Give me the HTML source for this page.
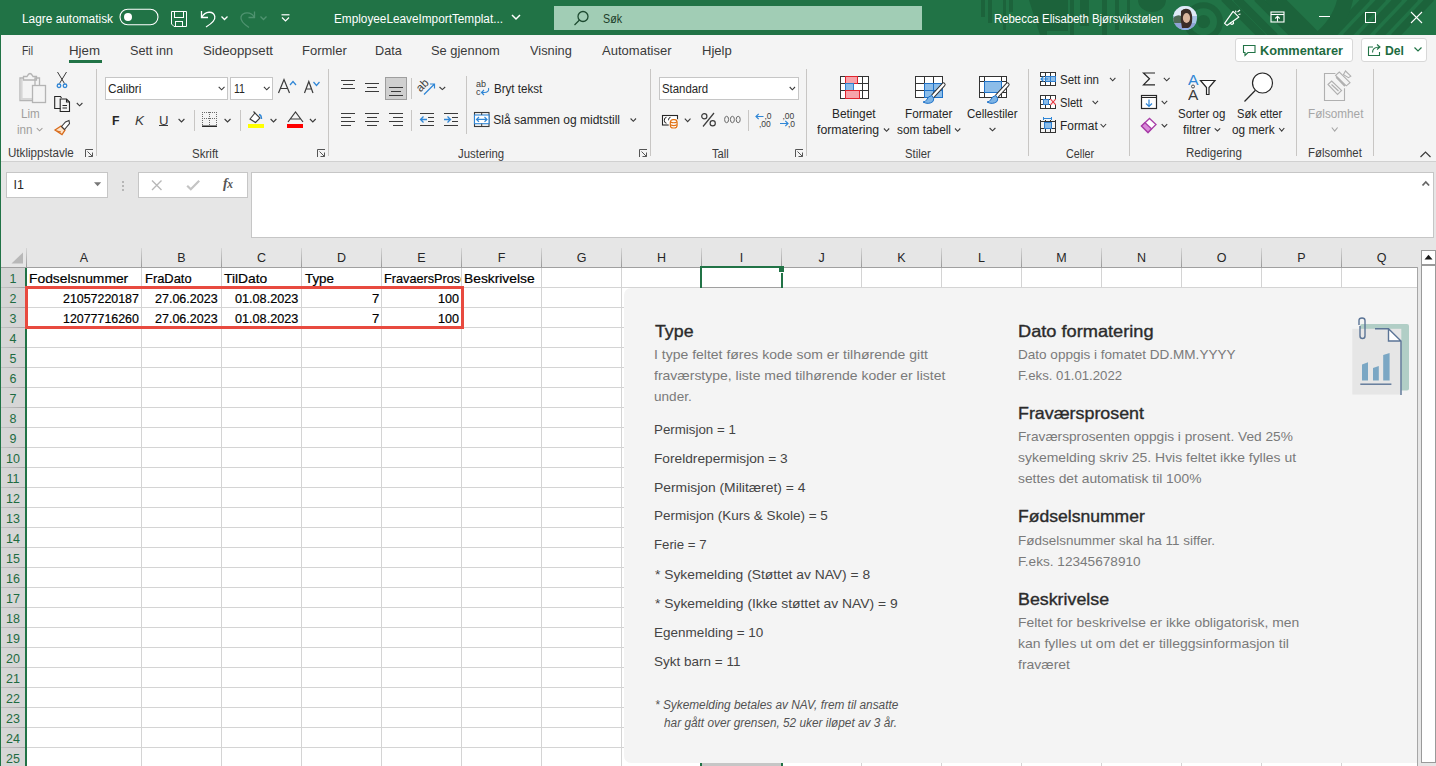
<!DOCTYPE html>
<html><head><meta charset="utf-8">
<style>
*{margin:0;padding:0;box-sizing:border-box}
html,body{width:1436px;height:766px;overflow:hidden;background:#fff;font-family:"Liberation Sans",sans-serif}
.a{position:absolute;white-space:nowrap}
svg.a{overflow:visible}
</style></head><body>
<div class="a" style="left:0;top:0;width:1436px;height:35px;background:#217346;overflow:hidden">
<svg class="a" style="left:0;top:0" width="1436" height="35">
<g fill="#1c633b">
<rect x="981" y="0" width="4" height="17"/><rect x="988" y="0" width="4" height="23"/>
<rect x="1003" y="0" width="3" height="30"/><rect x="1009" y="0" width="4" height="12"/>
<path d="M1029 0 H1047 V35 H1040 Z"/><rect x="1047" y="0" width="21" height="31"/>
<rect x="1070" y="0" width="4" height="35"/><rect x="1080" y="0" width="9" height="26"/>
<rect x="1102" y="0" width="5" height="35"/><rect x="1115" y="0" width="4" height="30"/><rect x="1127" y="0" width="3" height="20"/>
<path d="M1138 0 H1166 A14 12 0 0 1 1138 0 Z"/><circle cx="1203.5" cy="21.7" r="6.6"/>
</g>
<g fill="none" stroke="#1c633b">
<circle cx="1203.5" cy="21.7" r="16.5" stroke-width="6"/>
<circle cx="1270" cy="40" r="75" stroke-width="15" opacity="0"/>
</g>
<g stroke="#1c633b" stroke-width="8">
<line x1="1236" y1="-2" x2="1275" y2="37"/><line x1="1224" y1="-2" x2="1263" y2="37"/>
<line x1="1257" y1="-2" x2="1296" y2="37"/><line x1="1268" y1="-2" x2="1307" y2="37"/>
<line x1="1279" y1="-2" x2="1318" y2="37"/>
<line x1="1367" y1="-2" x2="1330" y2="37"/><line x1="1383" y1="-2" x2="1346" y2="37"/>
<line x1="1399" y1="-2" x2="1362" y2="37"/><line x1="1415" y1="-2" x2="1378" y2="37"/>
<line x1="1431" y1="-2" x2="1394" y2="37"/>
</g>
<path d="M1337 0 H1353 Q1348 24 1332 35 H1313 Q1332 20 1337 0 Z" fill="#1c633b"/>
</svg>
</div>
<div class="a" style="left:22.00px;top:11.64px;font-size:12px;color:#fff;line-height:normal;transform:scaleX(0.9887);transform-origin:0 0;">Lagre automatisk</div>
<svg class="a" style="left:119px;top:8px;" width="41" height="19" viewBox="0 0 41 19"><rect x="1" y="1.2" width="38" height="15.6" rx="7.8" fill="none" stroke="#fff" stroke-width="1.1"/><circle cx="9" cy="9" r="4" fill="#fff"/></svg>
<svg class="a" style="left:170px;top:10px;" width="19" height="19" viewBox="0 0 19 19"><g fill="none" stroke="#fff" stroke-width="1"><path d="M1.5 1.5 H16.5 V16.5 H4 L1.5 14 Z"/><rect x="4.5" y="1.5" width="9" height="6"/><rect x="5.5" y="11.5" width="7" height="5"/></g></svg>
<svg class="a" style="left:199px;top:10px;" width="32" height="19" viewBox="0 0 32 19"><g fill="none" stroke="#fff" stroke-width="1.3"><path d="M2.5 1 V7.5 H9"/><path d="M3 7 C6 1 14.5 0.5 15.8 6.5 C16.5 10 12 14 7 17"/><path d="M22.5 6.5 L25.5 9.5 L28.5 6.5"/></g></svg>
<svg class="a" style="left:239px;top:10px;" width="32" height="19" viewBox="0 0 32 19"><g fill="none" stroke="#4f9370" stroke-width="1.3"><path d="M15.5 1.5 V7.5 H9.5"/><path d="M15 7 C12.5 1.5 3.5 1.5 2 7 C1 11 5.5 14.5 10 17.5"/><path d="M21.5 6.5 L24.5 9.5 L27.5 6.5"/></g></svg>
<svg class="a" style="left:280px;top:13px;" width="11" height="10" viewBox="0 0 11 10"><g fill="none" stroke="#fff" stroke-width="1.2"><line x1="1.5" y1="1.8" x2="9.5" y2="1.8"/><path d="M2 4.5 L5.5 8 L9 4.5"/></g></svg>
<div class="a" style="left:334.00px;top:12.14px;font-size:12px;color:#fff;line-height:normal;transform:scaleX(0.9821);transform-origin:0 0;">EmployeeLeaveImportTemplat...</div>
<svg class="a" style="left:510px;top:13px;" width="12" height="9" viewBox="0 0 12 9"><path d="M2 2 L6 6 L10 2" fill="none" stroke="#fff" stroke-width="1.5"/></svg>
<div class="a" style="left:554px;top:6px;width:368px;height:24px;background:#a1cdb5;"></div>
<svg class="a" style="left:573px;top:10px;" width="17" height="17" viewBox="0 0 17 17"><g fill="none" stroke="#1d4a30" stroke-width="1.3"><circle cx="10" cy="6.5" r="5"/><line x1="6.5" y1="10" x2="1.5" y2="15"/></g></svg>
<div class="a" style="left:603.00px;top:12.14px;font-size:12px;color:#1d3d2a;line-height:normal;transform:scaleX(0.8906);transform-origin:0 0;">Søk</div>
<div class="a" style="left:994.00px;top:12.34px;font-size:12px;color:#fff;line-height:normal;transform:scaleX(0.9478);transform-origin:0 0;">Rebecca Elisabeth Bjørsvikstølen</div>
<svg class="a" style="left:1173px;top:6px;" width="25" height="25" viewBox="0 0 25 25"><defs><clipPath id="av"><circle cx="12.1" cy="12" r="11.9"/></clipPath></defs>
<g clip-path="url(#av)"><rect width="25" height="25" fill="#a9c4e6"/><rect y="0" width="25" height="10" fill="#dfeaf6"/>
<path d="M0 12 Q4 8 8 10 L9 18 L0 20 Z" fill="#4f6a55"/><rect y="17" width="25" height="8" fill="#8fa3d6"/>
<path d="M8 5 Q12 1 17 4 Q20 8 19 16 Q18 21 15 22 L9 22 Q7 14 8 5 Z" fill="#3a2c26"/>
<ellipse cx="13.5" cy="12" rx="3.6" ry="5" fill="#d9b59c"/><path d="M11 22 L17 22 L18 25 L10 25 Z" fill="#8fb0e8"/></g></svg>
<svg class="a" style="left:1222px;top:8px;" width="21" height="20" viewBox="0 0 21 20"><g fill="none" stroke="#fff" stroke-width="1.2" stroke-linejoin="round"><path d="M2.6 15.4 L11.1 3.4 L16.9 9.1 L4.9 17.4 Z"/><path d="M8.3 14.5 Q9 17.5 11.5 15.5 L11.3 13.3"/><line x1="13.5" y1="2.6" x2="14" y2="4.5"/><line x1="15.5" y1="4" x2="18" y2="2"/><line x1="16.5" y1="6.5" x2="18.5" y2="6"/></g></svg>
<svg class="a" style="left:1270px;top:11px;" width="16" height="13" viewBox="0 0 16 13"><g fill="none" stroke="#fff" stroke-width="1.1"><rect x="1" y="1" width="13" height="10"/><line x1="1" y1="3.5" x2="14" y2="3.5"/><path d="M7.5 10.5 V5.5 M5.3 7.5 L7.5 5.3 L9.7 7.5"/></g></svg>
<div class="a" style="left:1319px;top:16px;width:11px;height:1px;background:#fff;"></div>
<div class="a" style="left:1365px;top:12px;width:11px;height:11px;background:transparent;border:1px solid #fff"></div>
<svg class="a" style="left:1410px;top:11px;" width="13" height="13" viewBox="0 0 13 13"><g stroke="#fff" stroke-width="1.1"><line x1="1" y1="1" x2="12" y2="12"/><line x1="12" y1="1" x2="1" y2="12"/></g></svg>
<div class="a" style="left:0px;top:35px;width:1436px;height:127px;background:#f4f4f4;"></div>
<div class="a" style="left:22.00px;top:43.23px;font-size:13px;color:#3a3a3a;line-height:normal;transform:scaleX(0.8019);transform-origin:0 0;">Fil</div>
<div class="a" style="left:69.20px;top:43.23px;font-size:13px;color:#3a3a3a;line-height:normal;transform:scaleX(1.0219);transform-origin:0 0;">Hjem</div>
<div class="a" style="left:129.80px;top:43.23px;font-size:13px;color:#3a3a3a;line-height:normal;transform:scaleX(0.9755);transform-origin:0 0;">Sett inn</div>
<div class="a" style="left:203.00px;top:43.23px;font-size:13px;color:#3a3a3a;line-height:normal;transform:scaleX(1.0195);transform-origin:0 0;">Sideoppsett</div>
<div class="a" style="left:302.00px;top:43.23px;font-size:13px;color:#3a3a3a;line-height:normal;">Formler</div>
<div class="a" style="left:375.20px;top:43.23px;font-size:13px;color:#3a3a3a;line-height:normal;transform:scaleX(0.9760);transform-origin:0 0;">Data</div>
<div class="a" style="left:430.80px;top:43.23px;font-size:13px;color:#3a3a3a;line-height:normal;transform:scaleX(0.9903);transform-origin:0 0;">Se gjennom</div>
<div class="a" style="left:529.60px;top:43.23px;font-size:13px;color:#3a3a3a;line-height:normal;transform:scaleX(0.9858);transform-origin:0 0;">Visning</div>
<div class="a" style="left:602.10px;top:43.23px;font-size:13px;color:#3a3a3a;line-height:normal;">Automatiser</div>
<div class="a" style="left:701.80px;top:43.23px;font-size:13px;color:#3a3a3a;line-height:normal;transform:scaleX(1.0059);transform-origin:0 0;">Hjelp</div>
<div class="a" style="left:69px;top:60px;width:33px;height:3px;background:#217346;"></div>
<div class="a" style="left:1235px;top:38px;width:118px;height:24px;background:#fff;border:1px solid #d8d8d8;border-radius:3px"></div>
<svg class="a" style="left:1242px;top:44px;" width="15" height="13" viewBox="0 0 15 13"><path d="M1.5 1.5 H13 V8.5 H6 L3 11.5 V8.5 H1.5 Z" fill="none" stroke="#217346" stroke-width="1.1"/></svg>
<div class="a" style="left:1259.50px;top:43.23px;font-size:13px;color:#1e6b3f;line-height:normal;font-weight:bold;transform:scaleX(0.9820);transform-origin:0 0;">Kommentarer</div>
<div class="a" style="left:1361px;top:38px;width:66px;height:24px;background:#fff;border:1px solid #d8d8d8;border-radius:3px"></div>
<svg class="a" style="left:1367px;top:42px;" width="16" height="15" viewBox="0 0 16 15"><g fill="none" stroke="#217346" stroke-width="1.1"><path d="M6 5 H1.5 V13.5 H12.5 V10"/><path d="M5.5 10.5 C5.5 7 8.5 5 12.5 5 M10 2.5 L13 5 L10 7.5"/></g></svg>
<div class="a" style="left:1385.00px;top:43.23px;font-size:13px;color:#1e6b3f;line-height:normal;font-weight:bold;transform:scaleX(0.9392);transform-origin:0 0;">Del</div>
<svg class="a" style="left:1413px;top:46px;" width="10" height="7" viewBox="0 0 10 7"><path d="M1.5 1.5 L5 5 L8.5 1.5" fill="none" stroke="#217346" stroke-width="1.2"/></svg>
<div class="a" style="left:96px;top:69px;width:1px;height:87px;background:#c8c6c4;"></div>
<div class="a" style="left:328px;top:69px;width:1px;height:87px;background:#c8c6c4;"></div>
<div class="a" style="left:650px;top:69px;width:1px;height:87px;background:#c8c6c4;"></div>
<div class="a" style="left:806px;top:69px;width:1px;height:87px;background:#c8c6c4;"></div>
<div class="a" style="left:1028px;top:69px;width:1px;height:87px;background:#c8c6c4;"></div>
<div class="a" style="left:1129px;top:69px;width:1px;height:87px;background:#c8c6c4;"></div>
<div class="a" style="left:1296px;top:69px;width:1px;height:87px;background:#c8c6c4;"></div>
<div class="a" style="left:1373px;top:69px;width:1px;height:87px;background:#c8c6c4;"></div>
<div class="a" style="left:0px;top:161px;width:1436px;height:1px;background:#d0d0d0;"></div>
<svg class="a" style="left:1419px;top:150px;" width="13" height="9" viewBox="0 0 13 9"><path d="M1.5 7 L6.5 2 L11.5 7" fill="none" stroke="#3b3b3b" stroke-width="1.2"/></svg>
<div class="a" style="left:7.70px;top:146.44px;font-size:12px;color:#3b3b3b;line-height:normal;transform:scaleX(0.9658);transform-origin:0 0;">Utklippstavle</div>
<div class="a" style="left:191.60px;top:146.54px;font-size:12px;color:#3b3b3b;line-height:normal;transform:scaleX(0.9622);transform-origin:0 0;">Skrift</div>
<div class="a" style="left:458.00px;top:146.54px;font-size:12px;color:#3b3b3b;line-height:normal;transform:scaleX(0.9489);transform-origin:0 0;">Justering</div>
<div class="a" style="left:712.20px;top:146.54px;font-size:12px;color:#3b3b3b;line-height:normal;transform:scaleX(0.9330);transform-origin:0 0;">Tall</div>
<div class="a" style="left:905.30px;top:146.54px;font-size:12px;color:#3b3b3b;line-height:normal;transform:scaleX(0.9400);transform-origin:0 0;">Stiler</div>
<div class="a" style="left:1065.50px;top:146.54px;font-size:12px;color:#3b3b3b;line-height:normal;transform:scaleX(0.8998);transform-origin:0 0;">Celler</div>
<div class="a" style="left:1185.60px;top:146.44px;font-size:12px;color:#3b3b3b;line-height:normal;transform:scaleX(0.9632);transform-origin:0 0;">Redigering</div>
<div class="a" style="left:1308.20px;top:146.44px;font-size:12px;color:#3b3b3b;line-height:normal;transform:scaleX(0.9493);transform-origin:0 0;">Følsomhet</div>
<svg class="a" style="left:85px;top:149px;" width="9" height="9" viewBox="0 0 9 9"><g fill="none" stroke="#555" stroke-width="1"><path d="M0.5 8 V0.5 H8"/><path d="M2.5 2.5 L7.5 7.5 M7.5 3.5 V7.5 H3.5"/></g></svg>
<svg class="a" style="left:317px;top:149px;" width="9" height="9" viewBox="0 0 9 9"><g fill="none" stroke="#555" stroke-width="1"><path d="M0.5 8 V0.5 H8"/><path d="M2.5 2.5 L7.5 7.5 M7.5 3.5 V7.5 H3.5"/></g></svg>
<svg class="a" style="left:639px;top:149px;" width="9" height="9" viewBox="0 0 9 9"><g fill="none" stroke="#555" stroke-width="1"><path d="M0.5 8 V0.5 H8"/><path d="M2.5 2.5 L7.5 7.5 M7.5 3.5 V7.5 H3.5"/></g></svg>
<svg class="a" style="left:795px;top:149px;" width="9" height="9" viewBox="0 0 9 9"><g fill="none" stroke="#555" stroke-width="1"><path d="M0.5 8 V0.5 H8"/><path d="M2.5 2.5 L7.5 7.5 M7.5 3.5 V7.5 H3.5"/></g></svg>
<svg class="a" style="left:18px;top:72px;" width="30" height="32" viewBox="0 0 30 32"><g fill="none" stroke="#b4b4b4" stroke-width="1.3">
<path d="M6 6 H2 V28.5 H14"/><path d="M3.6 7 V27 H14" stroke="#d6d6d6" stroke-width="2"/>
<path d="M17 13 V6 H21.5 V13" /><path d="M5.5 8 V4.5 H9 Q10.5 1.5 12 1.5 Q13.5 1.5 15 4.5 H18.5 V8 Z"/>
<rect x="14.5" y="13.5" width="13" height="17"/></g></svg>
<div class="a" style="left:20.50px;top:106.94px;font-size:12px;color:#a19f9d;line-height:normal;transform:scaleX(0.9723);transform-origin:0 0;">Lim</div>
<div class="a" style="left:16.80px;top:122.54px;font-size:12px;color:#a19f9d;line-height:normal;transform:scaleX(0.9742);transform-origin:0 0;">inn</div>
<svg class="a" style="left:35px;top:127px;" width="8" height="5" viewBox="0 0 8 5"><path d="M1.7999999999999972 1.1999999999999886 L4.599999999999998 3.8000000000000114 L7.399999999999999 1.1999999999999886" fill="none" stroke="#a19f9d" stroke-width="1.1"/></svg>
<svg class="a" style="left:55px;top:71px;" width="14" height="18" viewBox="0 0 14 18"><g fill="none" stroke="#3b3b3b" stroke-width="1"><path d="M2.5 1 L9.5 12.5 M11.5 1 L4.5 12.5"/></g>
<g fill="none" stroke="#2f86d6" stroke-width="1.3"><circle cx="4" cy="14.8" r="1.8"/><circle cx="10" cy="14.8" r="1.8"/></g></svg>
<svg class="a" style="left:53px;top:95px;" width="18" height="18" viewBox="0 0 18 18"><g fill="none" stroke="#262626" stroke-width="1.1"><path d="M7.5 13.5 H1.7 V1.5 H7.5 L8.5 3"/>
<path d="M7.2 4 H13.5 L16.5 7 V16.5 H7.2 Z"/><path d="M13.5 4 V7 H16.5"/><path d="M9.5 10.5 H14 M9.5 13 H14"/></g></svg>
<svg class="a" style="left:75px;top:102px;" width="8" height="5" viewBox="0 0 8 5"><path d="M1.7999999999999972 1 L4.600000000000001 3.799999999999997 L7.400000000000006 1" fill="none" stroke="#3b3b3b" stroke-width="1.1"/></svg>
<svg class="a" style="left:53px;top:119px;" width="18" height="17" viewBox="0 0 18 17"><path d="M2 11 L8 7 L12 11 L9 15.5 Z" fill="#fbe3c9" stroke="#d86a1a" stroke-width="1.3"/>
<path d="M8.5 7.5 L12.5 3 L16 1.5 L16.5 4.5 L11.5 10.5 Z" fill="#fff" stroke="#3b3b3b" stroke-width="1.1"/>
<path d="M4 12 L8 13" stroke="#d86a1a" stroke-width="1"/></svg>
<div class="a" style="left:105px;top:77px;width:123px;height:23px;background:#fff;border:1px solid #c6c6c6"></div>
<div class="a" style="left:108.40px;top:81.89px;font-size:12.5px;color:#262626;line-height:normal;transform:scaleX(0.9429);transform-origin:0 0;">Calibri</div>
<svg class="a" style="left:217px;top:85px;" width="8" height="6" viewBox="0 0 8 6"><path d="M1.6999999999999886 1.7999999999999972 L4.599999999999994 4.799999999999997 L7.5 1.7999999999999972" fill="none" stroke="#3b3b3b" stroke-width="1.1"/></svg>
<div class="a" style="left:230px;top:77px;width:43px;height:23px;background:#fff;border:1px solid #c6c6c6"></div>
<div class="a" style="left:233.70px;top:81.89px;font-size:12.5px;color:#262626;line-height:normal;transform:scaleX(0.8401);transform-origin:0 0;">11</div>
<svg class="a" style="left:262px;top:85px;" width="8" height="6" viewBox="0 0 8 6"><path d="M1.8999999999999773 1.7999999999999972 L4.75 4.799999999999997 L7.600000000000023 1.7999999999999972" fill="none" stroke="#3b3b3b" stroke-width="1.1"/></svg>
<svg class="a" style="left:277px;top:78px;" width="22" height="17" viewBox="0 0 22 17"><path d="M1.5 15 L7 1.5 L12.5 15 M3.5 10.5 H10.5" fill="none" stroke="#3b3b3b" stroke-width="1.2"/>
<path d="M13 7 L16 3.5 L19 7" fill="none" stroke="#2f86d6" stroke-width="1.2"/></svg>
<svg class="a" style="left:303px;top:80px;" width="20" height="15" viewBox="0 0 20 15"><path d="M1.5 13 L5.8 1.5 L10 13 M3.2 9 H8.4" fill="none" stroke="#3b3b3b" stroke-width="1.2"/>
<path d="M10.5 2 L13.5 5.5 L16.5 2" fill="none" stroke="#2f86d6" stroke-width="1.2"/></svg>
<div class="a" style="left:112.00px;top:112.64px;font-size:13px;color:#262626;line-height:normal;font-weight:bold;transform:scaleX(0.9446);transform-origin:0 0;">F</div>
<div class="a" style="left:135.00px;top:112.64px;font-size:13px;color:#3b3b3b;line-height:normal;font-style:italic;transform:scaleX(1.0379);transform-origin:0 0;">K</div>
<div class="a" style="left:158.60px;top:112.64px;font-size:13px;color:#3b3b3b;line-height:normal;transform:scaleX(1.0119);transform-origin:0 0;">U</div>
<div class="a" style="left:159px;top:125px;width:9px;height:1px;background:#3b3b3b;"></div>
<svg class="a" style="left:177px;top:118px;" width="8" height="6" viewBox="0 0 8 6"><path d="M1.5999999999999943 1 L4.5 4 L7.400000000000006 1" fill="none" stroke="#3b3b3b" stroke-width="1.1"/></svg>
<div class="a" style="left:194px;top:110px;width:1px;height:21px;background:#c8c6c4;"></div>
<svg class="a" style="left:201px;top:111px;" width="18" height="17" viewBox="0 0 18 17"><g fill="#6a6a6a" shape-rendering="crispEdges"><rect x="1" y="1" width="1" height="1"/><rect x="1" y="7" width="1" height="1"/><rect x="3" y="1" width="1" height="1"/><rect x="3" y="7" width="1" height="1"/><rect x="5" y="1" width="1" height="1"/><rect x="5" y="7" width="1" height="1"/><rect x="7" y="1" width="1" height="1"/><rect x="7" y="7" width="1" height="1"/><rect x="9" y="1" width="1" height="1"/><rect x="9" y="7" width="1" height="1"/><rect x="11" y="1" width="1" height="1"/><rect x="11" y="7" width="1" height="1"/><rect x="13" y="1" width="1" height="1"/><rect x="13" y="7" width="1" height="1"/><rect x="15" y="1" width="1" height="1"/><rect x="15" y="7" width="1" height="1"/><rect x="1" y="1" width="1" height="1"/><rect x="8" y="1" width="1" height="1"/><rect x="15" y="1" width="1" height="1"/><rect x="1" y="3" width="1" height="1"/><rect x="8" y="3" width="1" height="1"/><rect x="15" y="3" width="1" height="1"/><rect x="1" y="5" width="1" height="1"/><rect x="8" y="5" width="1" height="1"/><rect x="15" y="5" width="1" height="1"/><rect x="1" y="7" width="1" height="1"/><rect x="8" y="7" width="1" height="1"/><rect x="15" y="7" width="1" height="1"/><rect x="1" y="9" width="1" height="1"/><rect x="8" y="9" width="1" height="1"/><rect x="15" y="9" width="1" height="1"/><rect x="1" y="11" width="1" height="1"/><rect x="8" y="11" width="1" height="1"/><rect x="15" y="11" width="1" height="1"/><rect x="1" y="13" width="1" height="1"/><rect x="8" y="13" width="1" height="1"/><rect x="15" y="13" width="1" height="1"/></g>
<rect x="1" y="14.5" width="15" height="1.5" fill="#262626"/></svg>
<svg class="a" style="left:223px;top:118px;" width="8" height="6" viewBox="0 0 8 6"><path d="M1.5999999999999943 1 L4.549999999999997 4 L7.5 1" fill="none" stroke="#3b3b3b" stroke-width="1.1"/></svg>
<div class="a" style="left:240px;top:110px;width:1px;height:21px;background:#c8c6c4;"></div>
<svg class="a" style="left:247px;top:110px;" width="18" height="19" viewBox="0 0 18 19"><path d="M3 9 L8 3 L13 8 L8.5 12.5 Z" fill="#fff" stroke="#3b3b3b" stroke-width="1.1"/><path d="M8 3 L6.5 1.5" stroke="#3b3b3b" stroke-width="1.1"/>
<path d="M12 4.5 Q14.5 5 14.5 9" fill="none" stroke="#2f86d6" stroke-width="1.4"/></svg>
<div class="a" style="left:248px;top:124px;width:16px;height:4px;background:#ffff00;"></div>
<svg class="a" style="left:269px;top:118px;" width="8" height="6" viewBox="0 0 8 6"><path d="M1.6000000000000227 1 L4.5 4 L7.399999999999977 1" fill="none" stroke="#3b3b3b" stroke-width="1.1"/></svg>
<svg class="a" style="left:286px;top:111px;" width="19" height="12" viewBox="0 0 19 12"><path d="M2 11 L9.5 1 L17 11 M4.5 8 H14.5" fill="none" stroke="#3b3b3b" stroke-width="1.2"/></svg>
<div class="a" style="left:287px;top:124px;width:16px;height:4px;background:#ff0000;"></div>
<svg class="a" style="left:308px;top:118px;" width="8" height="6" viewBox="0 0 8 6"><path d="M1.8999999999999773 1 L4.799999999999983 4 L7.699999999999989 1" fill="none" stroke="#3b3b3b" stroke-width="1.1"/></svg>
<div class="a" style="left:341px;top:80px;width:14px;height:1px;background:#3b3b3b;"></div><div class="a" style="left:343px;top:84px;width:10px;height:1px;background:#3b3b3b;"></div><div class="a" style="left:341px;top:88px;width:14px;height:1px;background:#3b3b3b;"></div>
<div class="a" style="left:365px;top:83px;width:14px;height:1px;background:#3b3b3b;"></div><div class="a" style="left:367px;top:87px;width:10px;height:1px;background:#3b3b3b;"></div><div class="a" style="left:365px;top:91px;width:14px;height:1px;background:#3b3b3b;"></div>
<div class="a" style="left:385px;top:77px;width:22px;height:23px;background:#d0d0d0;border:1px solid #9e9e9e"></div>
<div class="a" style="left:389px;top:87px;width:14px;height:1px;background:#3b3b3b;"></div><div class="a" style="left:391px;top:91px;width:10px;height:1px;background:#3b3b3b;"></div><div class="a" style="left:389px;top:95px;width:14px;height:1px;background:#3b3b3b;"></div>
<div class="a" style="left:411px;top:78px;width:1px;height:21px;background:#c8c6c4;"></div>
<svg class="a" style="left:417px;top:78px;" width="30" height="18" viewBox="0 0 30 18"><text x="0" y="0" font-family="Liberation Sans" font-size="11.5" fill="#3b3b3b" transform="translate(3.5 14.5) rotate(-45)">ab</text>
<path d="M7 16.5 L17.5 6 M13 6 H17.5 V10.5" fill="none" stroke="#2f86d6" stroke-width="1.2"/></svg>
<svg class="a" style="left:438px;top:86px;" width="8" height="5" viewBox="0 0 8 5"><path d="M1.5 1 L4.349999999999994 3.5999999999999943 L7.199999999999989 1" fill="none" stroke="#3b3b3b" stroke-width="1.1"/></svg>
<div class="a" style="left:341px;top:113px;width:14px;height:1px;background:#3b3b3b;"></div><div class="a" style="left:341px;top:117px;width:10px;height:1px;background:#3b3b3b;"></div><div class="a" style="left:341px;top:121px;width:14px;height:1px;background:#3b3b3b;"></div><div class="a" style="left:341px;top:125px;width:10px;height:1px;background:#3b3b3b;"></div>
<div class="a" style="left:365px;top:113px;width:14px;height:1px;background:#3b3b3b;"></div><div class="a" style="left:367px;top:117px;width:10px;height:1px;background:#3b3b3b;"></div><div class="a" style="left:365px;top:121px;width:14px;height:1px;background:#3b3b3b;"></div><div class="a" style="left:367px;top:125px;width:10px;height:1px;background:#3b3b3b;"></div>
<div class="a" style="left:389px;top:113px;width:14px;height:1px;background:#3b3b3b;"></div><div class="a" style="left:393px;top:117px;width:10px;height:1px;background:#3b3b3b;"></div><div class="a" style="left:389px;top:121px;width:14px;height:1px;background:#3b3b3b;"></div><div class="a" style="left:393px;top:125px;width:10px;height:1px;background:#3b3b3b;"></div>
<div class="a" style="left:411px;top:110px;width:1px;height:21px;background:#c8c6c4;"></div>
<div class="a" style="left:420px;top:113px;width:14px;height:1px;background:#3b3b3b;"></div><div class="a" style="left:428px;top:117px;width:6px;height:1px;background:#3b3b3b;"></div><div class="a" style="left:428px;top:121px;width:6px;height:1px;background:#3b3b3b;"></div><div class="a" style="left:420px;top:125px;width:14px;height:1px;background:#3b3b3b;"></div>
<svg class="a" style="left:419px;top:115px;" width="9" height="9" viewBox="0 0 9 9"><path d="M8 4.5 H1.5 M4.5 1.5 L1.5 4.5 L4.5 7.5" fill="none" stroke="#2f86d6" stroke-width="1.3"/></svg>
<div class="a" style="left:444px;top:113px;width:14px;height:1px;background:#3b3b3b;"></div><div class="a" style="left:452px;top:117px;width:6px;height:1px;background:#3b3b3b;"></div><div class="a" style="left:452px;top:121px;width:6px;height:1px;background:#3b3b3b;"></div><div class="a" style="left:444px;top:125px;width:14px;height:1px;background:#3b3b3b;"></div>
<svg class="a" style="left:443px;top:115px;" width="9" height="9" viewBox="0 0 9 9"><path d="M1 4.5 H7.5 M4.5 1.5 L7.5 4.5 L4.5 7.5" fill="none" stroke="#2f86d6" stroke-width="1.3"/></svg>
<div class="a" style="left:466px;top:76px;width:1px;height:58px;background:#c8c6c4;"></div>
<svg class="a" style="left:475px;top:78px;" width="16" height="19" viewBox="0 0 16 19"><text x="1" y="9" font-family="Liberation Sans" font-size="9" fill="#3b3b3b">ab</text><text x="1" y="16.5" font-family="Liberation Sans" font-size="9" fill="#3b3b3b">c</text>
<path d="M13.5 10 Q14.5 14.5 9 14.5 H7 M9 12 L6.5 14.5 L9 17" fill="none" stroke="#2f86d6" stroke-width="1.2"/></svg>
<div class="a" style="left:493.50px;top:82.14px;font-size:12px;color:#262626;line-height:normal;transform:scaleX(0.9638);transform-origin:0 0;">Bryt tekst</div>
<svg class="a" style="left:473px;top:111px;" width="18" height="17" viewBox="0 0 18 17"><rect x="1.5" y="1.5" width="14.5" height="14" fill="none" stroke="#3b3b3b" stroke-width="1.1"/>
<rect x="1.5" y="4" width="14.5" height="8.7" fill="#fff" stroke="#2f86d6" stroke-width="1.1"/>
<line x1="8.7" y1="1.5" x2="8.7" y2="4" stroke="#3b3b3b"/><line x1="8.7" y1="12.7" x2="8.7" y2="15.5" stroke="#3b3b3b"/>
<path d="M3.5 8.4 H14 M6 6 L3.5 8.4 L6 10.8 M11.5 6 L14 8.4 L11.5 10.8" fill="none" stroke="#2f86d6" stroke-width="1.2"/></svg>
<div class="a" style="left:493.30px;top:113.44px;font-size:12px;color:#262626;line-height:normal;">Slå sammen og midtstill</div>
<svg class="a" style="left:629px;top:117px;" width="8" height="5" viewBox="0 0 8 5"><path d="M1.6000000000000227 1.5 L4.300000000000011 4.299999999999997 L7.0 1.5" fill="none" stroke="#3b3b3b" stroke-width="1.1"/></svg>
<div class="a" style="left:659px;top:77px;width:140px;height:23px;background:#fff;border:1px solid #c6c6c6"></div>
<div class="a" style="left:662.00px;top:81.89px;font-size:12.5px;color:#262626;line-height:normal;transform:scaleX(0.9107);transform-origin:0 0;">Standard</div>
<svg class="a" style="left:788px;top:86px;" width="8" height="5" viewBox="0 0 8 5"><path d="M1.7000000000000455 1 L4.350000000000023 3.799999999999997 L7.0 1" fill="none" stroke="#3b3b3b" stroke-width="1.1"/></svg>
<svg class="a" style="left:661px;top:114px;" width="19" height="16" viewBox="0 0 19 16"><rect x="1.5" y="1.5" width="15" height="9.5" fill="#fff" stroke="#262626" stroke-width="1.1"/>
<path d="M5.5 3.3 Q3.3 3.3 3.3 6.3 Q3.3 9.2 5.5 9.2 M9.5 3.3 Q7.5 3.3 7.5 6.3" fill="none" stroke="#262626" stroke-width="1"/>
<rect x="8.5" y="5" width="8.3" height="9.3" rx="3" fill="#fff" stroke="#fff" stroke-width="1.6"/>
<rect x="9.3" y="5.6" width="6.8" height="8.4" rx="2.8" fill="#fff" stroke="#e07010" stroke-width="1.2"/>
<path d="M9.5 8 Q12.7 9.6 15.9 8 M9.5 10.8 Q12.7 12.4 15.9 10.8" fill="none" stroke="#e07010" stroke-width="1.1"/></svg>
<svg class="a" style="left:683px;top:117px;" width="8" height="6" viewBox="0 0 8 6"><path d="M1.7999999999999545 1.5999999999999943 L4.649999999999977 4.700000000000003 L7.5 1.5999999999999943" fill="none" stroke="#3b3b3b" stroke-width="1.1"/></svg>
<svg class="a" style="left:700px;top:112px;" width="18" height="16" viewBox="0 0 18 16"><g fill="none" stroke="#3b3b3b" stroke-width="1.2"><circle cx="4.3" cy="4.2" r="2.6"/><circle cx="12.7" cy="11.3" r="2.6"/><line x1="14" y1="1" x2="3" y2="14.5"/></g></svg>
<svg class="a" style="left:724px;top:115px;" width="18" height="10" viewBox="0 0 18 10"><g fill="none" stroke="#6a6a6a" stroke-width="1"><ellipse cx="2.6" cy="4.5" rx="2" ry="3.2"/><ellipse cx="8.4" cy="4.5" rx="2" ry="3.2"/><ellipse cx="14.2" cy="4.5" rx="2" ry="3.2"/></g></svg>
<div class="a" style="left:748px;top:110px;width:1px;height:21px;background:#c8c6c4;"></div>
<svg class="a" style="left:754px;top:111px;" width="19" height="18" viewBox="0 0 19 18"><path d="M9.5 5.5 H2 M4.7 2.8 L2 5.5 L4.7 8.2" fill="none" stroke="#2f86d6" stroke-width="1.2"/>
<text x="10.5" y="8" font-family="Liberation Sans" font-size="8.5" fill="#3b3b3b">,0</text><text x="5" y="16" font-family="Liberation Sans" font-size="8.5" fill="#3b3b3b">,00</text></svg>
<svg class="a" style="left:778px;top:111px;" width="19" height="18" viewBox="0 0 19 18"><text x="4.5" y="8" font-family="Liberation Sans" font-size="8.5" fill="#3b3b3b">,00</text><text x="10" y="16" font-family="Liberation Sans" font-size="8.5" fill="#3b3b3b">,0</text>
<path d="M2 12.5 H10 M7.3 9.8 L10 12.5 L7.3 15.2" fill="none" stroke="#2f86d6" stroke-width="1.2"/></svg>
<svg class="a" style="left:839px;top:75px;" width="31" height="25" viewBox="0 0 31 25"><rect x="1.5" y="1.5" width="28" height="22" fill="#fff" stroke="#333" stroke-width="1"/>
<g stroke="#333" stroke-width="1" shape-rendering="crispEdges"><line x1="23.5" y1="1" x2="23.5" y2="23.5"/><line x1="1" y1="8.5" x2="29" y2="8.5"/><line x1="1" y1="15.5" x2="29" y2="15.5"/><line x1="6.5" y1="1" x2="6.5" y2="23"/></g>
<rect x="6.5" y="1.5" width="12" height="7" fill="#f7a3aa" stroke="#e0242e" stroke-width="1"/>
<rect x="6.5" y="8.5" width="8" height="7" fill="#8cbde9" stroke="#2f7fd0" stroke-width="1"/>
<rect x="6.5" y="15.5" width="14" height="8" fill="#f7a3aa" stroke="#e0242e" stroke-width="1"/></svg>
<div class="a" style="left:832.20px;top:107.04px;font-size:12px;color:#262626;line-height:normal;transform:scaleX(0.9902);transform-origin:0 0;">Betinget</div>
<div class="a" style="left:817.20px;top:123.14px;font-size:12px;color:#262626;line-height:normal;transform:scaleX(1.0233);transform-origin:0 0;">formatering</div>
<svg class="a" style="left:882px;top:127px;" width="8" height="5" viewBox="0 0 8 5"><path d="M1.8999999999999773 1.5 L4.550000000000011 4.300000000000011 L7.2000000000000455 1.5" fill="none" stroke="#3b3b3b" stroke-width="1.1"/></svg>
<svg class="a" style="left:913px;top:74px;" width="38" height="32" viewBox="0 0 38 32"><rect x="2.5" y="2.5" width="27" height="21" fill="#fff" stroke="#333" stroke-width="1"/>
<g stroke="#333" stroke-width="1" shape-rendering="crispEdges"><line x1="11.5" y1="2" x2="11.5" y2="24"/><line x1="20.5" y1="2" x2="20.5" y2="10"/><line x1="2" y1="9.5" x2="12" y2="9.5"/><line x1="2" y1="16.5" x2="12" y2="16.5"/><line x1="21" y1="9.5" x2="30" y2="9.5"/></g>
<rect x="11.5" y="9.5" width="18" height="14" fill="#8cbde9" stroke="#1f72c8" stroke-width="1"/>
<g stroke="#1f72c8" stroke-width="1" shape-rendering="crispEdges"><line x1="20.5" y1="10" x2="20.5" y2="23"/><line x1="12" y1="16.5" x2="29" y2="16.5"/></g><path d="M30.5 10.5 L20 22" stroke="#333" stroke-width="4.2" stroke-linecap="round"/><path d="M30.5 10.5 L20 22" stroke="#fff" stroke-width="2.3" stroke-linecap="round"/>
<path d="M19 21.5 q-4 0.5 -5.5 4.5 q-1.2 2 -3.5 2 q5.5 3 10 -0.5 q2 -2.5 -1 -6 z" fill="#7db4e6" stroke="#1f72c8" stroke-width="1"/></svg>
<div class="a" style="left:905.30px;top:107.04px;font-size:12px;color:#262626;line-height:normal;transform:scaleX(0.9760);transform-origin:0 0;">Formater</div>
<div class="a" style="left:896.50px;top:123.14px;font-size:12px;color:#262626;line-height:normal;transform:scaleX(0.9874);transform-origin:0 0;">som tabell</div>
<svg class="a" style="left:954px;top:127px;" width="8" height="5" viewBox="0 0 8 5"><path d="M1 1.5 L3.6499999999999773 4.300000000000011 L6.2999999999999545 1.5" fill="none" stroke="#3b3b3b" stroke-width="1.1"/></svg>
<svg class="a" style="left:977px;top:74px;" width="38" height="32" viewBox="0 0 38 32"><rect x="2.5" y="2.5" width="27" height="21" fill="#fff" stroke="#333" stroke-width="1"/>
<g stroke="#333" stroke-width="1" shape-rendering="crispEdges"><line x1="7.5" y1="2" x2="7.5" y2="24"/><line x1="24.5" y1="2" x2="24.5" y2="24"/><line x1="2" y1="7.5" x2="30" y2="7.5"/><line x1="2" y1="18.5" x2="30" y2="18.5"/></g>
<rect x="7.5" y="7.5" width="17" height="11" fill="#8cbde9" stroke="#1f72c8" stroke-width="1"/><path d="M30.5 10.5 L20 22" stroke="#333" stroke-width="4.2" stroke-linecap="round"/><path d="M30.5 10.5 L20 22" stroke="#fff" stroke-width="2.3" stroke-linecap="round"/>
<path d="M19 21.5 q-4 0.5 -5.5 4.5 q-1.2 2 -3.5 2 q5.5 3 10 -0.5 q2 -2.5 -1 -6 z" fill="#7db4e6" stroke="#1f72c8" stroke-width="1"/></svg>
<div class="a" style="left:967.30px;top:107.04px;font-size:12px;color:#262626;line-height:normal;transform:scaleX(0.9605);transform-origin:0 0;">Cellestiler</div>
<svg class="a" style="left:988px;top:127px;" width="8" height="5" viewBox="0 0 8 5"><path d="M1.6000000000000227 1 L4.5 3.8000000000000114 L7.399999999999977 1" fill="none" stroke="#3b3b3b" stroke-width="1.1"/></svg>
<svg class="a" style="left:1039px;top:71px;" width="18" height="17" viewBox="0 0 18 17"><rect x="1.5" y="1.5" width="15" height="13" fill="#fff" stroke="#333" stroke-width="1"/>
<g stroke="#333" stroke-width="1" shape-rendering="crispEdges"><line x1="6.5" y1="1" x2="6.5" y2="15"/><line x1="11.5" y1="1" x2="11.5" y2="15"/><line x1="1" y1="5.5" x2="17" y2="5.5"/><line x1="1" y1="10.5" x2="17" y2="10.5"/></g><rect x="6.5" y="5.5" width="10" height="5" fill="#8cbde9" stroke="#2f7fd0" stroke-width="1"/><line x1="11.5" y1="5.5" x2="11.5" y2="10.5" stroke="#2f7fd0" shape-rendering="crispEdges"/>
<rect x="1" y="6" width="5" height="4" fill="#fff"/><path d="M9 8 H2 M4.5 5.5 L2 8 L4.5 10.5" fill="none" stroke="#2f86d6" stroke-width="1.2"/></svg>
<div class="a" style="left:1059.50px;top:73.14px;font-size:12px;color:#262626;line-height:normal;transform:scaleX(0.9584);transform-origin:0 0;">Sett inn</div>
<svg class="a" style="left:1109px;top:76px;" width="8" height="5" viewBox="0 0 8 5"><path d="M1 1.9000000000000057 L3.7000000000000455 4.799999999999997 L6.400000000000091 1.9000000000000057" fill="none" stroke="#3b3b3b" stroke-width="1.1"/></svg>
<svg class="a" style="left:1039px;top:94px;" width="18" height="17" viewBox="0 0 18 17"><rect x="1.5" y="1.5" width="15" height="13" fill="#fff" stroke="#333" stroke-width="1"/>
<g stroke="#333" stroke-width="1" shape-rendering="crispEdges"><line x1="6.5" y1="1" x2="6.5" y2="15"/><line x1="11.5" y1="1" x2="11.5" y2="15"/><line x1="1" y1="5.5" x2="17" y2="5.5"/><line x1="1" y1="10.5" x2="17" y2="10.5"/></g><rect x="11" y="5" width="7" height="6" fill="#f4f4f4"/><rect x="4.5" y="5.5" width="5" height="5" fill="#8cbde9" stroke="#2f7fd0" stroke-width="1"/>
<path d="M11.5 5 L16.8 10.8 M16.8 5 L11.5 10.8" stroke="#e8303a" stroke-width="1.1"/></svg>
<div class="a" style="left:1059.50px;top:95.74px;font-size:12px;color:#262626;line-height:normal;transform:scaleX(0.9287);transform-origin:0 0;">Slett</div>
<svg class="a" style="left:1091px;top:99px;" width="8" height="5" viewBox="0 0 8 5"><path d="M1.599999999999909 1.9000000000000057 L4.2999999999999545 4.799999999999997 L7.0 1.9000000000000057" fill="none" stroke="#3b3b3b" stroke-width="1.1"/></svg>
<svg class="a" style="left:1039px;top:117px;" width="18" height="17" viewBox="0 0 18 17"><g stroke="#333" stroke-width="1" fill="none" shape-rendering="crispEdges"><path d="M1.5 3 V15.5 H16.5 V3"/>
<line x1="6.5" y1="3" x2="6.5" y2="15.5"/><line x1="11.5" y1="3" x2="11.5" y2="15.5"/><line x1="1" y1="11.5" x2="17" y2="11.5"/><line x1="1" y1="4.5" x2="17" y2="4.5"/></g>
<rect x="5.5" y="5.5" width="7" height="6" fill="#8cbde9" stroke="#2f7fd0" stroke-width="1"/>
<path d="M4 1.5 H13 M4.5 0 V3 M12.5 0 V3" stroke="#2f86d6" stroke-width="1" shape-rendering="crispEdges"/></svg>
<div class="a" style="left:1059.50px;top:118.94px;font-size:12px;color:#262626;line-height:normal;transform:scaleX(0.9921);transform-origin:0 0;">Format</div>
<svg class="a" style="left:1099px;top:123px;" width="8" height="6" viewBox="0 0 8 6"><path d="M1.599999999999909 1 L4.349999999999909 4 L7.099999999999909 1" fill="none" stroke="#3b3b3b" stroke-width="1.1"/></svg>
<svg class="a" style="left:1142px;top:71px;" width="15" height="16" viewBox="0 0 15 16"><path d="M13 2 H1.5 L7.5 7.7 L1.5 13.8 H13" fill="none" stroke="#262626" stroke-width="1.2"/></svg>
<svg class="a" style="left:1162px;top:76px;" width="8" height="5" viewBox="0 0 8 5"><path d="M1.7999999999999545 1.9000000000000057 L4.699999999999932 4.799999999999997 L7.599999999999909 1.9000000000000057" fill="none" stroke="#3b3b3b" stroke-width="1.1"/></svg>
<svg class="a" style="left:1140px;top:94px;" width="18" height="16" viewBox="0 0 18 16"><rect x="1.5" y="1.5" width="15" height="13" fill="#fff" stroke="#262626" stroke-width="1.2"/><line x1="1.5" y1="3.5" x2="16.5" y2="3.5" stroke="#262626" stroke-width="1"/>
<path d="M9 5.5 V12.5 M6 9.5 L9 12.5 L12 9.5" fill="none" stroke="#2f86d6" stroke-width="1.2"/></svg>
<svg class="a" style="left:1160px;top:99px;" width="8" height="5" viewBox="0 0 8 5"><path d="M1.7000000000000455 1.9000000000000057 L4.4500000000000455 4.799999999999997 L7.2000000000000455 1.9000000000000057" fill="none" stroke="#3b3b3b" stroke-width="1.1"/></svg>
<svg class="a" style="left:1140px;top:117px;" width="18" height="17" viewBox="0 0 18 17"><path d="M1.5 9 L9.5 1.5 L16 7.5 L8 15.5 Z" fill="#fff" stroke="#a83ea8" stroke-width="1.3"/>
<path d="M1.5 9 L5 5.7 L11.5 11.8 L8 15.5 Z" fill="#d98ad9" stroke="#a83ea8" stroke-width="1.3"/></svg>
<svg class="a" style="left:1160px;top:123px;" width="8" height="5" viewBox="0 0 8 5"><path d="M1.7000000000000455 1.2000000000000028 L4.4500000000000455 4.0 L7.2000000000000455 1.2000000000000028" fill="none" stroke="#3b3b3b" stroke-width="1.1"/></svg>
<div class="a" style="left:1187.50px;top:72.48px;font-size:14.5px;color:#2f86d6;line-height:normal;transform:scaleX(1.0856);transform-origin:0 0;">A</div>
<div class="a" style="left:1187.70px;top:86.68px;font-size:14.5px;color:#3b3b3b;line-height:normal;transform:scaleX(1.0649);transform-origin:0 0;">A</div>
<svg class="a" style="left:1190px;top:84px;" width="6" height="5" viewBox="0 0 6 5"><circle cx="3" cy="2.5" r="1.5" fill="none" stroke="#3b3b3b" stroke-width="0.9"/></svg>
<svg class="a" style="left:1199px;top:79px;" width="18" height="18" viewBox="0 0 18 18"><path d="M1.5 1.5 H16 L10 8.5 V15.5 H7.5 V8.5 Z" fill="#fff" stroke="#262626" stroke-width="1.2"/></svg>
<div class="a" style="left:1178.10px;top:106.94px;font-size:12px;color:#262626;line-height:normal;transform:scaleX(0.9584);transform-origin:0 0;">Sorter og</div>
<div class="a" style="left:1183.30px;top:122.74px;font-size:12px;color:#262626;line-height:normal;transform:scaleX(1.0351);transform-origin:0 0;">filtrer</div>
<svg class="a" style="left:1213px;top:127px;" width="8" height="5" viewBox="0 0 8 5"><path d="M1.7000000000000455 1.3000000000000114 L4.4500000000000455 3.9000000000000057 L7.2000000000000455 1.3000000000000114" fill="none" stroke="#3b3b3b" stroke-width="1.1"/></svg>
<svg class="a" style="left:1243px;top:72px;" width="32" height="32" viewBox="0 0 32 32"><circle cx="19.5" cy="11" r="10" fill="#fff" stroke="#262626" stroke-width="1.2"/><line x1="12.2" y1="18.5" x2="1.5" y2="29.5" stroke="#262626" stroke-width="1.2"/></svg>
<div class="a" style="left:1236.50px;top:106.74px;font-size:12px;color:#262626;line-height:normal;transform:scaleX(0.9286);transform-origin:0 0;">Søk etter</div>
<div class="a" style="left:1232.10px;top:122.54px;font-size:12px;color:#262626;line-height:normal;transform:scaleX(0.9828);transform-origin:0 0;">og merk</div>
<svg class="a" style="left:1278px;top:127px;" width="8" height="6" viewBox="0 0 8 6"><path d="M1.099999999999909 1 L3.699999999999932 4.199999999999989 L6.2999999999999545 1" fill="none" stroke="#3b3b3b" stroke-width="1.1"/></svg>
<svg class="a" style="left:1320px;top:68px;" width="36" height="36" viewBox="0 0 36 36"><path d="M15.400000000000091 5.5 H4.5 V32.5 H24.5 V20.200000000000003" fill="none" stroke="#b0b0b0" stroke-width="1.1"/>
<polygon points="8.0,16.5 11.7,13.1 21.6,22.5 17.5,26.5" fill="none" stroke="#b0b0b0" stroke-width="1.1"/>
<line x1="11.5" y1="16.599999999999994" x2="18.5" y2="23" stroke="#b0b0b0" stroke-width="1.3"/>
<polygon points="23.5,6.6 25.5,3.0 30.8,8.2 28.4,9.7" fill="#f4f4f4" stroke="#b0b0b0" stroke-width="1.1"/>
<polygon points="15.6,7.4 19.3,4.0 30.0,14.7 26.3,17.8" fill="#f4f4f4" stroke="#b0b0b0" stroke-width="1.1"/>
<line x1="16.299999999999955" y1="9.200000000000003" x2="25" y2="18" stroke="#b0b0b0" stroke-width="1.8"/>
</svg>
<div class="a" style="left:1307.50px;top:106.74px;font-size:12px;color:#a6a6a6;line-height:normal;transform:scaleX(0.9775);transform-origin:0 0;">Følsomhet</div>
<svg class="a" style="left:1330px;top:126px;" width="8" height="6" viewBox="0 0 8 6"><path d="M1.7999999999999545 1.5 L4.699999999999932 5.199999999999989 L7.599999999999909 1.5" fill="none" stroke="#a6a6a6" stroke-width="1.1"/></svg>
<div class="a" style="left:0px;top:162px;width:1436px;height:86px;background:#e6e6e6;"></div>
<div class="a" style="left:6px;top:172px;width:102px;height:26px;background:#fff;border:1px solid #c6c6c6"></div>
<div class="a" style="left:13.60px;top:178.49px;font-size:12.5px;color:#262626;line-height:normal;">I1</div>
<svg class="a" style="left:93px;top:181px;" width="10" height="7" viewBox="0 0 10 7"><path d="M1 1.2 H8.2 L4.6 5.2 Z" fill="#777"/></svg>
<div class="a" style="left:122px;top:180.5px;width:2px;height:2px;background:#a6a6a6;border-radius:1px"></div>
<div class="a" style="left:122px;top:184.5px;width:2px;height:2px;background:#a6a6a6;border-radius:1px"></div>
<div class="a" style="left:122px;top:188.5px;width:2px;height:2px;background:#a6a6a6;border-radius:1px"></div>
<div class="a" style="left:138px;top:172px;width:110px;height:26px;background:#fff;border:1px solid #c6c6c6"></div>
<svg class="a" style="left:150px;top:179px;" width="14" height="13" viewBox="0 0 14 13"><path d="M2 1.5 L11.5 11 M11.5 1.5 L2 11" stroke="#b8b8b8" stroke-width="1.4"/></svg>
<svg class="a" style="left:185px;top:179px;" width="17" height="13" viewBox="0 0 17 13"><path d="M2.2 6.8 L5.8 10.3 L14.2 1.8" fill="none" stroke="#c4c4c4" stroke-width="2.2"/></svg>
<div class="a" style="left:223px;top:176px;font-family:'Liberation Serif',serif;font-style:italic;font-weight:bold;font-size:14px;color:#555;letter-spacing:-0.5px">f<span style="font-size:11.5px">x</span></div>
<div class="a" style="left:251px;top:172px;width:1183px;height:66px;background:#fff;border:1px solid #c6c6c6"></div>
<svg class="a" style="left:1421px;top:180px;" width="10" height="7" viewBox="0 0 10 7"><path d="M1.5 5.5 L4.8 2 L8.1 5.5" fill="none" stroke="#666" stroke-width="1.8"/></svg>
<div class="a" style="left:27px;top:268px;width:1391px;height:498px;background:#fff;"></div>
<div class="a" style="left:1px;top:248px;width:1417px;height:19px;background:#e6e6e6;"></div>
<svg class="a" style="left:11px;top:252px;" width="13" height="12" viewBox="0 0 13 12"><path d="M12 0.5 V11.5 H0.5 Z" fill="#b8b8b8"/></svg>
<div class="a" style="left:26px;top:248px;width:1px;height:19px;background:linear-gradient(#d6d6d6,#9a9a9a);"></div>
<div class="a" style="left:27px;top:251px;width:114px;text-align:center;font-size:12.5px;color:#262626;line-height:15px">A</div>
<div class="a" style="left:141px;top:248px;width:1px;height:19px;background:linear-gradient(#d6d6d6,#9a9a9a);"></div>
<div class="a" style="left:142px;top:251px;width:79px;text-align:center;font-size:12.5px;color:#262626;line-height:15px">B</div>
<div class="a" style="left:221px;top:248px;width:1px;height:19px;background:linear-gradient(#d6d6d6,#9a9a9a);"></div>
<div class="a" style="left:222px;top:251px;width:79px;text-align:center;font-size:12.5px;color:#262626;line-height:15px">C</div>
<div class="a" style="left:301px;top:248px;width:1px;height:19px;background:linear-gradient(#d6d6d6,#9a9a9a);"></div>
<div class="a" style="left:302px;top:251px;width:79px;text-align:center;font-size:12.5px;color:#262626;line-height:15px">D</div>
<div class="a" style="left:381px;top:248px;width:1px;height:19px;background:linear-gradient(#d6d6d6,#9a9a9a);"></div>
<div class="a" style="left:382px;top:251px;width:79px;text-align:center;font-size:12.5px;color:#262626;line-height:15px">E</div>
<div class="a" style="left:461px;top:248px;width:1px;height:19px;background:linear-gradient(#d6d6d6,#9a9a9a);"></div>
<div class="a" style="left:462px;top:251px;width:79px;text-align:center;font-size:12.5px;color:#262626;line-height:15px">F</div>
<div class="a" style="left:541px;top:248px;width:1px;height:19px;background:linear-gradient(#d6d6d6,#9a9a9a);"></div>
<div class="a" style="left:542px;top:251px;width:79px;text-align:center;font-size:12.5px;color:#262626;line-height:15px">G</div>
<div class="a" style="left:621px;top:248px;width:1px;height:19px;background:linear-gradient(#d6d6d6,#9a9a9a);"></div>
<div class="a" style="left:622px;top:251px;width:79px;text-align:center;font-size:12.5px;color:#262626;line-height:15px">H</div>
<div class="a" style="left:701px;top:248px;width:1px;height:19px;background:linear-gradient(#d6d6d6,#9a9a9a);"></div>
<div class="a" style="left:702px;top:251px;width:79px;text-align:center;font-size:12.5px;color:#262626;line-height:15px">I</div>
<div class="a" style="left:781px;top:248px;width:1px;height:19px;background:linear-gradient(#d6d6d6,#9a9a9a);"></div>
<div class="a" style="left:782px;top:251px;width:79px;text-align:center;font-size:12.5px;color:#262626;line-height:15px">J</div>
<div class="a" style="left:861px;top:248px;width:1px;height:19px;background:linear-gradient(#d6d6d6,#9a9a9a);"></div>
<div class="a" style="left:862px;top:251px;width:79px;text-align:center;font-size:12.5px;color:#262626;line-height:15px">K</div>
<div class="a" style="left:941px;top:248px;width:1px;height:19px;background:linear-gradient(#d6d6d6,#9a9a9a);"></div>
<div class="a" style="left:942px;top:251px;width:79px;text-align:center;font-size:12.5px;color:#262626;line-height:15px">L</div>
<div class="a" style="left:1021px;top:248px;width:1px;height:19px;background:linear-gradient(#d6d6d6,#9a9a9a);"></div>
<div class="a" style="left:1022px;top:251px;width:79px;text-align:center;font-size:12.5px;color:#262626;line-height:15px">M</div>
<div class="a" style="left:1101px;top:248px;width:1px;height:19px;background:linear-gradient(#d6d6d6,#9a9a9a);"></div>
<div class="a" style="left:1102px;top:251px;width:79px;text-align:center;font-size:12.5px;color:#262626;line-height:15px">N</div>
<div class="a" style="left:1181px;top:248px;width:1px;height:19px;background:linear-gradient(#d6d6d6,#9a9a9a);"></div>
<div class="a" style="left:1182px;top:251px;width:79px;text-align:center;font-size:12.5px;color:#262626;line-height:15px">O</div>
<div class="a" style="left:1261px;top:248px;width:1px;height:19px;background:linear-gradient(#d6d6d6,#9a9a9a);"></div>
<div class="a" style="left:1262px;top:251px;width:79px;text-align:center;font-size:12.5px;color:#262626;line-height:15px">P</div>
<div class="a" style="left:1341px;top:248px;width:1px;height:19px;background:linear-gradient(#d6d6d6,#9a9a9a);"></div>
<div class="a" style="left:1342px;top:251px;width:79px;text-align:center;font-size:12.5px;color:#262626;line-height:15px">Q</div>
<div class="a" style="left:0px;top:267px;width:1418px;height:1px;background:#a0a0a0;"></div>
<div class="a" style="left:1px;top:268px;width:24px;height:498px;background:#d6d6d6;"></div>
<div class="a" style="left:1px;top:287px;width:24px;height:1px;background:linear-gradient(90deg,#c4c4c4,#a6a6a6);"></div>
<div class="a" style="left:1px;top:272px;width:24px;text-align:center;font-size:12.5px;color:#1e6b41;line-height:15px">1</div>
<div class="a" style="left:1px;top:307px;width:24px;height:1px;background:linear-gradient(90deg,#c4c4c4,#a6a6a6);"></div>
<div class="a" style="left:1px;top:292px;width:24px;text-align:center;font-size:12.5px;color:#1e6b41;line-height:15px">2</div>
<div class="a" style="left:1px;top:327px;width:24px;height:1px;background:linear-gradient(90deg,#c4c4c4,#a6a6a6);"></div>
<div class="a" style="left:1px;top:312px;width:24px;text-align:center;font-size:12.5px;color:#1e6b41;line-height:15px">3</div>
<div class="a" style="left:1px;top:347px;width:24px;height:1px;background:linear-gradient(90deg,#c4c4c4,#a6a6a6);"></div>
<div class="a" style="left:1px;top:332px;width:24px;text-align:center;font-size:12.5px;color:#1e6b41;line-height:15px">4</div>
<div class="a" style="left:1px;top:367px;width:24px;height:1px;background:linear-gradient(90deg,#c4c4c4,#a6a6a6);"></div>
<div class="a" style="left:1px;top:352px;width:24px;text-align:center;font-size:12.5px;color:#1e6b41;line-height:15px">5</div>
<div class="a" style="left:1px;top:387px;width:24px;height:1px;background:linear-gradient(90deg,#c4c4c4,#a6a6a6);"></div>
<div class="a" style="left:1px;top:372px;width:24px;text-align:center;font-size:12.5px;color:#1e6b41;line-height:15px">6</div>
<div class="a" style="left:1px;top:407px;width:24px;height:1px;background:linear-gradient(90deg,#c4c4c4,#a6a6a6);"></div>
<div class="a" style="left:1px;top:392px;width:24px;text-align:center;font-size:12.5px;color:#1e6b41;line-height:15px">7</div>
<div class="a" style="left:1px;top:427px;width:24px;height:1px;background:linear-gradient(90deg,#c4c4c4,#a6a6a6);"></div>
<div class="a" style="left:1px;top:412px;width:24px;text-align:center;font-size:12.5px;color:#1e6b41;line-height:15px">8</div>
<div class="a" style="left:1px;top:447px;width:24px;height:1px;background:linear-gradient(90deg,#c4c4c4,#a6a6a6);"></div>
<div class="a" style="left:1px;top:432px;width:24px;text-align:center;font-size:12.5px;color:#1e6b41;line-height:15px">9</div>
<div class="a" style="left:1px;top:467px;width:24px;height:1px;background:linear-gradient(90deg,#c4c4c4,#a6a6a6);"></div>
<div class="a" style="left:1px;top:452px;width:24px;text-align:center;font-size:12.5px;color:#1e6b41;line-height:15px">10</div>
<div class="a" style="left:1px;top:487px;width:24px;height:1px;background:linear-gradient(90deg,#c4c4c4,#a6a6a6);"></div>
<div class="a" style="left:1px;top:472px;width:24px;text-align:center;font-size:12.5px;color:#1e6b41;line-height:15px">11</div>
<div class="a" style="left:1px;top:507px;width:24px;height:1px;background:linear-gradient(90deg,#c4c4c4,#a6a6a6);"></div>
<div class="a" style="left:1px;top:492px;width:24px;text-align:center;font-size:12.5px;color:#1e6b41;line-height:15px">12</div>
<div class="a" style="left:1px;top:527px;width:24px;height:1px;background:linear-gradient(90deg,#c4c4c4,#a6a6a6);"></div>
<div class="a" style="left:1px;top:512px;width:24px;text-align:center;font-size:12.5px;color:#1e6b41;line-height:15px">13</div>
<div class="a" style="left:1px;top:547px;width:24px;height:1px;background:linear-gradient(90deg,#c4c4c4,#a6a6a6);"></div>
<div class="a" style="left:1px;top:532px;width:24px;text-align:center;font-size:12.5px;color:#1e6b41;line-height:15px">14</div>
<div class="a" style="left:1px;top:567px;width:24px;height:1px;background:linear-gradient(90deg,#c4c4c4,#a6a6a6);"></div>
<div class="a" style="left:1px;top:552px;width:24px;text-align:center;font-size:12.5px;color:#1e6b41;line-height:15px">15</div>
<div class="a" style="left:1px;top:587px;width:24px;height:1px;background:linear-gradient(90deg,#c4c4c4,#a6a6a6);"></div>
<div class="a" style="left:1px;top:572px;width:24px;text-align:center;font-size:12.5px;color:#1e6b41;line-height:15px">16</div>
<div class="a" style="left:1px;top:607px;width:24px;height:1px;background:linear-gradient(90deg,#c4c4c4,#a6a6a6);"></div>
<div class="a" style="left:1px;top:592px;width:24px;text-align:center;font-size:12.5px;color:#1e6b41;line-height:15px">17</div>
<div class="a" style="left:1px;top:627px;width:24px;height:1px;background:linear-gradient(90deg,#c4c4c4,#a6a6a6);"></div>
<div class="a" style="left:1px;top:612px;width:24px;text-align:center;font-size:12.5px;color:#1e6b41;line-height:15px">18</div>
<div class="a" style="left:1px;top:647px;width:24px;height:1px;background:linear-gradient(90deg,#c4c4c4,#a6a6a6);"></div>
<div class="a" style="left:1px;top:632px;width:24px;text-align:center;font-size:12.5px;color:#1e6b41;line-height:15px">19</div>
<div class="a" style="left:1px;top:667px;width:24px;height:1px;background:linear-gradient(90deg,#c4c4c4,#a6a6a6);"></div>
<div class="a" style="left:1px;top:652px;width:24px;text-align:center;font-size:12.5px;color:#1e6b41;line-height:15px">20</div>
<div class="a" style="left:1px;top:687px;width:24px;height:1px;background:linear-gradient(90deg,#c4c4c4,#a6a6a6);"></div>
<div class="a" style="left:1px;top:672px;width:24px;text-align:center;font-size:12.5px;color:#1e6b41;line-height:15px">21</div>
<div class="a" style="left:1px;top:707px;width:24px;height:1px;background:linear-gradient(90deg,#c4c4c4,#a6a6a6);"></div>
<div class="a" style="left:1px;top:692px;width:24px;text-align:center;font-size:12.5px;color:#1e6b41;line-height:15px">22</div>
<div class="a" style="left:1px;top:727px;width:24px;height:1px;background:linear-gradient(90deg,#c4c4c4,#a6a6a6);"></div>
<div class="a" style="left:1px;top:712px;width:24px;text-align:center;font-size:12.5px;color:#1e6b41;line-height:15px">23</div>
<div class="a" style="left:1px;top:747px;width:24px;height:1px;background:linear-gradient(90deg,#c4c4c4,#a6a6a6);"></div>
<div class="a" style="left:1px;top:732px;width:24px;text-align:center;font-size:12.5px;color:#1e6b41;line-height:15px">24</div>
<div class="a" style="left:1px;top:767px;width:24px;height:1px;background:linear-gradient(90deg,#c4c4c4,#a6a6a6);"></div>
<div class="a" style="left:1px;top:752px;width:24px;text-align:center;font-size:12.5px;color:#1e6b41;line-height:15px">25</div>
<div class="a" style="left:25px;top:268px;width:2px;height:498px;background:#217346;"></div>
<div class="a" style="left:141px;top:268px;width:1px;height:498px;background:#d4d4d4;"></div>
<div class="a" style="left:221px;top:268px;width:1px;height:498px;background:#d4d4d4;"></div>
<div class="a" style="left:301px;top:268px;width:1px;height:498px;background:#d4d4d4;"></div>
<div class="a" style="left:381px;top:268px;width:1px;height:498px;background:#d4d4d4;"></div>
<div class="a" style="left:461px;top:268px;width:1px;height:498px;background:#d4d4d4;"></div>
<div class="a" style="left:541px;top:268px;width:1px;height:498px;background:#d4d4d4;"></div>
<div class="a" style="left:621px;top:268px;width:1px;height:498px;background:#d4d4d4;"></div>
<div class="a" style="left:701px;top:268px;width:1px;height:498px;background:#d4d4d4;"></div>
<div class="a" style="left:781px;top:268px;width:1px;height:498px;background:#d4d4d4;"></div>
<div class="a" style="left:861px;top:268px;width:1px;height:498px;background:#d4d4d4;"></div>
<div class="a" style="left:941px;top:268px;width:1px;height:498px;background:#d4d4d4;"></div>
<div class="a" style="left:1021px;top:268px;width:1px;height:498px;background:#d4d4d4;"></div>
<div class="a" style="left:1101px;top:268px;width:1px;height:498px;background:#d4d4d4;"></div>
<div class="a" style="left:1181px;top:268px;width:1px;height:498px;background:#d4d4d4;"></div>
<div class="a" style="left:1261px;top:268px;width:1px;height:498px;background:#d4d4d4;"></div>
<div class="a" style="left:1341px;top:268px;width:1px;height:498px;background:#d4d4d4;"></div>
<div class="a" style="left:27px;top:287px;width:1390px;height:1px;background:#d4d4d4;"></div>
<div class="a" style="left:27px;top:307px;width:1390px;height:1px;background:#d4d4d4;"></div>
<div class="a" style="left:27px;top:327px;width:1390px;height:1px;background:#d4d4d4;"></div>
<div class="a" style="left:27px;top:347px;width:1390px;height:1px;background:#d4d4d4;"></div>
<div class="a" style="left:27px;top:367px;width:1390px;height:1px;background:#d4d4d4;"></div>
<div class="a" style="left:27px;top:387px;width:1390px;height:1px;background:#d4d4d4;"></div>
<div class="a" style="left:27px;top:407px;width:1390px;height:1px;background:#d4d4d4;"></div>
<div class="a" style="left:27px;top:427px;width:1390px;height:1px;background:#d4d4d4;"></div>
<div class="a" style="left:27px;top:447px;width:1390px;height:1px;background:#d4d4d4;"></div>
<div class="a" style="left:27px;top:467px;width:1390px;height:1px;background:#d4d4d4;"></div>
<div class="a" style="left:27px;top:487px;width:1390px;height:1px;background:#d4d4d4;"></div>
<div class="a" style="left:27px;top:507px;width:1390px;height:1px;background:#d4d4d4;"></div>
<div class="a" style="left:27px;top:527px;width:1390px;height:1px;background:#d4d4d4;"></div>
<div class="a" style="left:27px;top:547px;width:1390px;height:1px;background:#d4d4d4;"></div>
<div class="a" style="left:27px;top:567px;width:1390px;height:1px;background:#d4d4d4;"></div>
<div class="a" style="left:27px;top:587px;width:1390px;height:1px;background:#d4d4d4;"></div>
<div class="a" style="left:27px;top:607px;width:1390px;height:1px;background:#d4d4d4;"></div>
<div class="a" style="left:27px;top:627px;width:1390px;height:1px;background:#d4d4d4;"></div>
<div class="a" style="left:27px;top:647px;width:1390px;height:1px;background:#d4d4d4;"></div>
<div class="a" style="left:27px;top:667px;width:1390px;height:1px;background:#d4d4d4;"></div>
<div class="a" style="left:27px;top:687px;width:1390px;height:1px;background:#d4d4d4;"></div>
<div class="a" style="left:27px;top:707px;width:1390px;height:1px;background:#d4d4d4;"></div>
<div class="a" style="left:27px;top:727px;width:1390px;height:1px;background:#d4d4d4;"></div>
<div class="a" style="left:27px;top:747px;width:1390px;height:1px;background:#d4d4d4;"></div>
<div class="a" style="left:27px;top:767px;width:1390px;height:1px;background:#d4d4d4;"></div>
<div class="a" style="left:1417px;top:267px;width:1px;height:499px;background:#a6a6a6;"></div>
<div class="a" style="left:29.40px;top:271.04px;font-size:13px;color:#000;line-height:normal;transform:scaleX(1.0645);transform-origin:0 0;-webkit-text-stroke:0.2px #000;">Fodselsnummer</div>
<div class="a" style="left:144.70px;top:271.04px;font-size:13px;color:#000;line-height:normal;transform:scaleX(0.9924);transform-origin:0 0;-webkit-text-stroke:0.2px #000;">FraDato</div>
<div class="a" style="left:224.30px;top:271.04px;font-size:13px;color:#000;line-height:normal;transform:scaleX(1.0616);transform-origin:0 0;-webkit-text-stroke:0.2px #000;">TilDato</div>
<div class="a" style="left:304.50px;top:271.04px;font-size:13px;color:#000;line-height:normal;transform:scaleX(1.0290);transform-origin:0 0;-webkit-text-stroke:0.2px #000;">Type</div>
<div class="a" style="left:383px;top:268px;width:78px;height:19px;overflow:hidden"><div class="a" style="left:1.20px;top:3.04px;font-size:13px;color:#000;line-height:normal;transform:scaleX(0.9760);transform-origin:0 0;-webkit-text-stroke:0.2px #000;">FravaersProsent</div></div>
<div class="a" style="left:463.90px;top:271.04px;font-size:13px;color:#000;line-height:normal;transform:scaleX(1.0622);transform-origin:0 0;-webkit-text-stroke:0.2px #000;">Beskrivelse</div>
<div class="a" style="left:62.80px;top:290.84px;font-size:13px;color:#000;line-height:normal;transform:scaleX(0.9545);transform-origin:0 0;-webkit-text-stroke:0.2px #000;">21057220187</div>
<div class="a" style="left:155.40px;top:290.84px;font-size:13px;color:#000;line-height:normal;transform:scaleX(0.9622);transform-origin:0 0;-webkit-text-stroke:0.2px #000;">27.06.2023</div>
<div class="a" style="left:235.20px;top:290.84px;font-size:13px;color:#000;line-height:normal;transform:scaleX(0.9730);transform-origin:0 0;-webkit-text-stroke:0.2px #000;">01.08.2023</div>
<div class="a" style="left:372.20px;top:290.84px;font-size:13px;color:#000;line-height:normal;transform:scaleX(1.0098);transform-origin:0 0;-webkit-text-stroke:0.2px #000;">7</div>
<div class="a" style="left:438.30px;top:290.84px;font-size:13px;color:#000;line-height:normal;transform:scaleX(0.9683);transform-origin:0 0;-webkit-text-stroke:0.2px #000;">100</div>
<div class="a" style="left:62.80px;top:310.63px;font-size:13px;color:#000;line-height:normal;transform:scaleX(0.9545);transform-origin:0 0;-webkit-text-stroke:0.2px #000;">12077716260</div>
<div class="a" style="left:155.40px;top:310.63px;font-size:13px;color:#000;line-height:normal;transform:scaleX(0.9622);transform-origin:0 0;-webkit-text-stroke:0.2px #000;">27.06.2023</div>
<div class="a" style="left:235.20px;top:310.63px;font-size:13px;color:#000;line-height:normal;transform:scaleX(0.9730);transform-origin:0 0;-webkit-text-stroke:0.2px #000;">01.08.2023</div>
<div class="a" style="left:372.20px;top:310.63px;font-size:13px;color:#000;line-height:normal;transform:scaleX(1.0098);transform-origin:0 0;-webkit-text-stroke:0.2px #000;">7</div>
<div class="a" style="left:438.30px;top:310.63px;font-size:13px;color:#000;line-height:normal;transform:scaleX(0.9683);transform-origin:0 0;-webkit-text-stroke:0.2px #000;">100</div>
<div class="a" style="left:25px;top:286px;width:439px;height:43px;background:transparent;border:3px solid #e84a3f"></div>
<div class="a" style="left:700px;top:266px;width:83px;height:22px;background:transparent;border:2px solid #217346;border-bottom:none"></div>
<div class="a" style="left:781px;top:271px;width:2px;height:2px;background:#fff;"></div>
<div class="a" style="left:779px;top:266px;width:5px;height:6px;background:#217346;"></div>
<div class="a" style="left:702px;top:287px;width:79px;height:1px;background:#a0a0a0;"></div>
<div class="a" style="left:700px;top:763px;width:2px;height:3px;background:#217346;"></div>
<div class="a" style="left:702px;top:763px;width:79px;height:3px;background:#c6c6c6;"></div>
<div class="a" style="left:781px;top:763px;width:2px;height:3px;background:#217346;"></div>
<div class="a" style="left:1418px;top:248px;width:18px;height:518px;background:#e6e6e6;"></div>
<div class="a" style="left:1421px;top:250px;width:15px;height:15px;background:#fff;border:1px solid #9a9a9a"></div>
<svg class="a" style="left:1424px;top:254px;" width="9" height="6" viewBox="0 0 9 6"><path d="M0.5 5.5 L4.5 0.8 L8.5 5.5 Z" fill="#1a1a1a"/></svg>
<div class="a" style="left:1421px;top:265px;width:15px;height:498px;background:#fff;border:1px solid #9a9a9a"></div>
<div class="a" style="left:0px;top:35px;width:1px;height:731px;background:#217346;"></div>
<div class="a" style="left:624px;top:288px;width:793px;height:475px;background:#f4f4f4;border-radius:7px 0 0 7px"></div>
<div class="a" style="left:654.50px;top:322.27px;font-size:16.5px;color:#2b2b2b;line-height:normal;transform:scaleX(1.0764);transform-origin:0 0;-webkit-text-stroke:0.35px #2b2b2b;">Type</div>
<div class="a" style="left:1017.90px;top:322.37px;font-size:16.5px;color:#2b2b2b;line-height:normal;transform:scaleX(1.1035);transform-origin:0 0;-webkit-text-stroke:0.35px #2b2b2b;">Dato formatering</div>
<div class="a" style="left:1018.00px;top:403.77px;font-size:16.5px;color:#2b2b2b;line-height:normal;transform:scaleX(1.0821);transform-origin:0 0;-webkit-text-stroke:0.35px #2b2b2b;">Fraværsprosent</div>
<div class="a" style="left:1017.90px;top:506.97px;font-size:16.5px;color:#2b2b2b;line-height:normal;transform:scaleX(1.0639);transform-origin:0 0;-webkit-text-stroke:0.35px #2b2b2b;">Fødselsnummer</div>
<div class="a" style="left:1018.00px;top:590.17px;font-size:16.5px;color:#2b2b2b;line-height:normal;transform:scaleX(1.0799);transform-origin:0 0;-webkit-text-stroke:0.35px #2b2b2b;">Beskrivelse</div>
<div class="a" style="left:654.00px;top:347.24px;font-size:13px;color:#7a7a7a;line-height:normal;transform:scaleX(1.0770);transform-origin:0 0;">I type feltet føres kode som er tilhørende gitt</div>
<div class="a" style="left:654.00px;top:368.44px;font-size:13px;color:#7a7a7a;line-height:normal;transform:scaleX(1.0752);transform-origin:0 0;">fraværstype, liste med tilhørende koder er listet</div>
<div class="a" style="left:654.00px;top:389.13px;font-size:13px;color:#7a7a7a;line-height:normal;transform:scaleX(1.0432);transform-origin:0 0;">under.</div>
<div class="a" style="left:1018.00px;top:346.54px;font-size:13px;color:#7a7a7a;line-height:normal;transform:scaleX(1.0417);transform-origin:0 0;">Dato oppgis i fomatet DD.MM.YYYY</div>
<div class="a" style="left:1018.00px;top:367.84px;font-size:13px;color:#7a7a7a;line-height:normal;transform:scaleX(1.0144);transform-origin:0 0;">F.eks. 01.01.2022</div>
<div class="a" style="left:1018.00px;top:428.63px;font-size:13px;color:#7a7a7a;line-height:normal;transform:scaleX(1.0535);transform-origin:0 0;">Fraværsprosenten oppgis i prosent. Ved 25%</div>
<div class="a" style="left:1018.00px;top:449.84px;font-size:13px;color:#7a7a7a;line-height:normal;transform:scaleX(1.0719);transform-origin:0 0;">sykemelding skriv 25. Hvis feltet ikke fylles ut</div>
<div class="a" style="left:1018.00px;top:471.24px;font-size:13px;color:#7a7a7a;line-height:normal;transform:scaleX(1.0620);transform-origin:0 0;">settes det automatisk til 100%</div>
<div class="a" style="left:1018.00px;top:532.53px;font-size:13px;color:#7a7a7a;line-height:normal;transform:scaleX(1.0360);transform-origin:0 0;">Fødselsnummer skal ha 11 siffer.</div>
<div class="a" style="left:1018.00px;top:553.63px;font-size:13px;color:#7a7a7a;line-height:normal;transform:scaleX(1.0471);transform-origin:0 0;">F.eks. 12345678910</div>
<div class="a" style="left:1018.00px;top:614.84px;font-size:13px;color:#7a7a7a;line-height:normal;transform:scaleX(1.0664);transform-origin:0 0;">Feltet for beskrivelse er ikke obligatorisk, men</div>
<div class="a" style="left:1018.00px;top:636.03px;font-size:13px;color:#7a7a7a;line-height:normal;transform:scaleX(1.0774);transform-origin:0 0;">kan fylles ut om det er tilleggsinformasjon til</div>
<div class="a" style="left:1018.00px;top:656.53px;font-size:13px;color:#7a7a7a;line-height:normal;transform:scaleX(1.0744);transform-origin:0 0;">fraværet</div>
<div class="a" style="left:654.10px;top:421.68px;font-size:13.5px;color:#444444;line-height:normal;transform:scaleX(0.9866);transform-origin:0 0;">Permisjon = 1</div>
<div class="a" style="left:654.10px;top:450.68px;font-size:13.5px;color:#444444;line-height:normal;transform:scaleX(1.0154);transform-origin:0 0;">Foreldrepermisjon = 3</div>
<div class="a" style="left:654.10px;top:479.58px;font-size:13.5px;color:#444444;line-height:normal;transform:scaleX(1.0271);transform-origin:0 0;">Permisjon (Militæret) = 4</div>
<div class="a" style="left:654.10px;top:508.38px;font-size:13.5px;color:#444444;line-height:normal;">Permisjon (Kurs &amp; Skole) = 5</div>
<div class="a" style="left:654.10px;top:537.38px;font-size:13.5px;color:#444444;line-height:normal;transform:scaleX(0.9786);transform-origin:0 0;">Ferie = 7</div>
<div class="a" style="left:654.60px;top:566.58px;font-size:13.5px;color:#444444;line-height:normal;transform:scaleX(1.0233);transform-origin:0 0;">* Sykemelding (Støttet av NAV) = 8</div>
<div class="a" style="left:654.60px;top:595.98px;font-size:13.5px;color:#444444;line-height:normal;transform:scaleX(1.0260);transform-origin:0 0;">* Sykemelding (Ikke støttet av NAV) = 9</div>
<div class="a" style="left:654.10px;top:625.28px;font-size:13.5px;color:#444444;line-height:normal;">Egenmelding = 10</div>
<div class="a" style="left:654.10px;top:653.98px;font-size:13.5px;color:#444444;line-height:normal;">Sykt barn = 11</div>
<div class="a" style="left:654.60px;top:698.34px;font-size:12px;color:#525252;line-height:normal;font-style:italic;transform:scaleX(0.9868);transform-origin:0 0;">* Sykemelding betales av NAV, frem til ansatte</div>
<div class="a" style="left:663.50px;top:715.94px;font-size:12px;color:#525252;line-height:normal;font-style:italic;transform:scaleX(0.9859);transform-origin:0 0;">har gått over grensen, 52 uker iløpet av 3 år.</div>
<svg class="a" style="left:1350px;top:316px;" width="62" height="82" viewBox="0 0 62 82"><rect x="10" y="8" width="49" height="66.5" rx="2" fill="#b1cec6"/>
<rect x="2.3" y="12.8" width="49" height="65.8" fill="#e6e6e6"/>
<path d="M38.5 12.8 L51 25 H38.5 Z" fill="#fff"/>
<path d="M25 12.8 H38.5 L51 25 V79 M38.5 12.8 V25 H51" fill="none" stroke="#5b7496" stroke-width="1.4"/>
<path d="M9 9 V4.5 Q9 2 12 2 Q15 2 15 4.5 V20 Q15 22.5 12.5 22.5 Q10 22.5 10 20 V10" fill="none" stroke="#5b7496" stroke-width="1.4"/>
<path d="M12 48.5 L18 46.3 V64.5 H12 Z M23 52 L28.8 50 V64.5 H23 Z M33.2 39 L39.6 36.9 V64.5 H33.2 Z" fill="#7ba7c4"/>
<line x1="10.3" y1="68.2" x2="41.4" y2="68.2" stroke="#5b7496" stroke-width="1.4"/></svg>
</body></html>
